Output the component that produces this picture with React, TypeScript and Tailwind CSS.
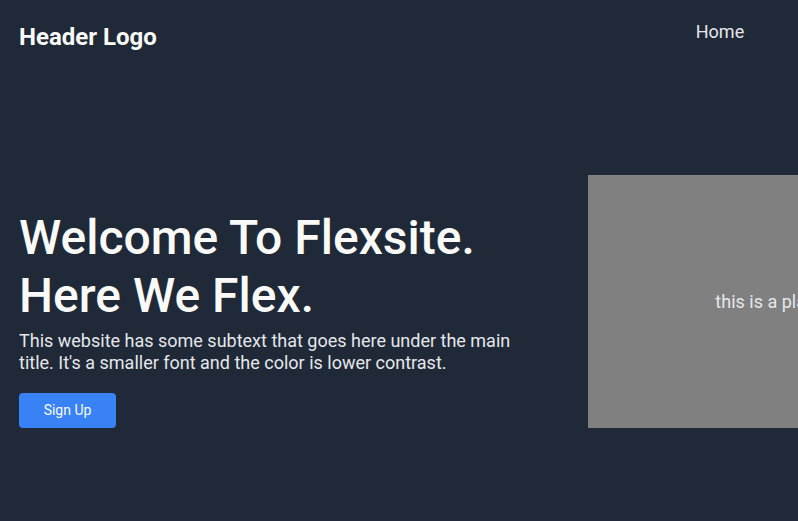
export default function App() {
  return (
    <div className="w-full h-[521px] overflow-hidden bg-[#1f2937] font-['Roboto',sans-serif]">
      <div className="w-[1300px]">
        {/* header */}
        <header className="flex items-center h-[72px] px-[19px]">
          <div className="text-[24px] font-bold text-[#f9faf8] mt-[1px]">Header Logo</div>
          <nav className="flex gap-[64px] ml-[539px] -mt-[9px] text-[18px] text-[#e5e7eb]">
            <a href="#">Home</a>
            <a href="#">Link One</a>
            <a href="#">Link Two</a>
          </nav>
        </header>

        {/* hero */}
        <section className="flex items-end pt-[103px] px-[19px]">
          <div className="w-[530px] shrink-0">
            <h1 className="text-[48px] leading-[58px] font-medium text-[#f9faf8]">
              Welcome To Flexsite.
              <br />
              Here We Flex.
            </h1>
            <p className="text-[18px] leading-[22px] text-[#e5e7eb] mt-[5px] w-[500px]">
              This website has some subtext that goes here under the main title. It's a smaller font
              and the color is lower contrast.
            </p>
            <button className="mt-[19px] w-[97px] h-[35px] rounded-[4px] bg-[#3882f6] text-[14px] text-[#f9faf8]">
              Sign Up
            </button>
          </div>
          <div className="ml-[39px] w-[520px] h-[253px] shrink-0 bg-[#808080] flex items-center justify-center text-[18px] text-[#e5e7eb]">
            this is a placeholder for an image
          </div>
        </section>
      </div>
    </div>
  );
}
